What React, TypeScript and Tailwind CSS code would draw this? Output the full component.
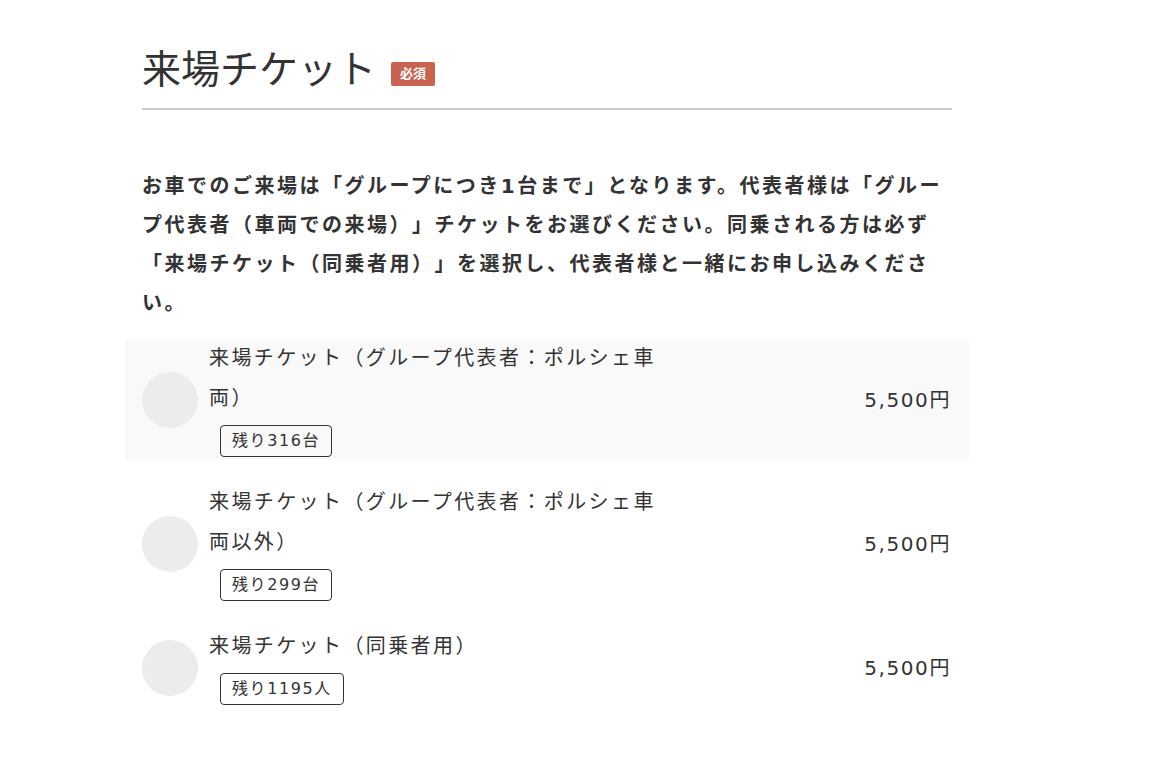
const font = { fontFamily: '"DejaVu Sans", "Noto Sans CJK JP", sans-serif' };

const tickets = [
  { name: "来場チケット（グループ代表者：ポルシェ車両）", stock: "残り316台", price: "5,500円", highlight: true },
  { name: "来場チケット（グループ代表者：ポルシェ車両以外）", stock: "残り299台", price: "5,500円", highlight: false },
  { name: "来場チケット（同乗者用）", stock: "残り1195人", price: "5,500円", highlight: false },
];

const TicketRow = ({ name, stock, price, highlight }: (typeof tickets)[number]) => {
  return (
    <div
      className={`-mx-[17px] flex items-center pl-[17px] pr-[18px] ${highlight ? "bg-[#f9f9f9]" : ""}`}
    >
      {/* Placeholder circle */}
      <div className="h-[56px] w-[56px] shrink-0 rounded-full bg-[#ececec]" />
      <div className="ml-[11px] flex-1 pb-[2px]">
        <p className="-mt-[3px] w-[460px] text-[20px] leading-[40px] tracking-[0.12em] text-[#333]">{name}</p>
        <span className="ml-[11px] mt-[7px] inline-block rounded-[4px] border border-[#333] px-[11px] text-[16px] leading-[30px] tracking-[0.1em] text-[#333]">
          {stock}
        </span>
      </div>
      <div className="text-[20px] tracking-[0.08em] text-[#333]">{price}</div>
    </div>
  );
};

export default function App() {
  return (
    <div className="min-h-screen bg-white [text-spacing-trim:space-all]" style={font}>
      <div className="ml-[142px] w-[810px] pt-[44px]">
        <div className="flex items-center border-b-2 border-[#cccccc] pb-[12px]">
          <h2 className="text-[39px] leading-[52px] text-[#333]">来場チケット</h2>
          <span className="ml-[15px] mt-[8px] rounded-[2px] bg-[#c9634f] px-[9px] text-[13px] font-bold leading-[24px] text-white">
            必須
          </span>
        </div>

        <p className="mt-[57px] text-[20px] font-bold leading-[39px] tracking-[0.125em] text-[#333]">
          お車でのご来場は「グループにつき1台まで」となります。代表者様は「グループ代表者（車両での来場）」チケットをお選びください。同乗される方は必ず「来場チケット（同乗者用）」を選択し、代表者様と一緒にお申し込みください。
        </p>

        <div className="mt-[18px] flex flex-col gap-[26px]">
          {tickets.map((t) => (
            <TicketRow key={t.name} {...t} />
          ))}
        </div>
      </div>
    </div>
  );
}
